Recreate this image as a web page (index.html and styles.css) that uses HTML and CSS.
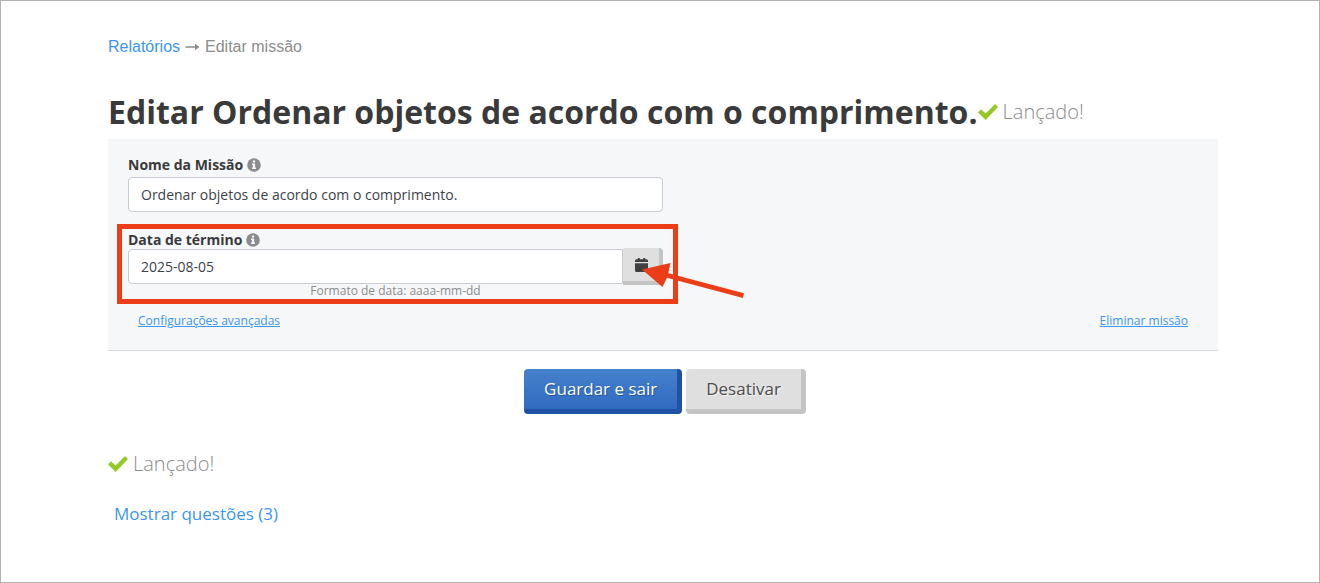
FILE: index.html
```html
<!DOCTYPE html>
<html lang="pt">
<head>
<meta charset="utf-8">
<meta name="viewport" content="width=device-width, initial-scale=1">
<title>Editar missão</title>
<link rel="stylesheet" href="styles.css">
</head>
<body>
<svg class="defs" aria-hidden="true">
  <symbol id="check" viewBox="0 0 20 16"><path d="M0 8.6 3 5.3 7.6 9.6 17 0 20 3 7.7 16Z"/></symbol>
  <symbol id="info" viewBox="0 0 14 14"><circle cx="7" cy="7" r="6.8" fill="#8c8c8c"/><path fill="#f6f7f9" d="M5.9 2.4h2.2v2H5.9ZM5 5.6h3.1v4h.9v1.5H5V9.6h.9V7.1H5Z"/></symbol>
</svg>
<main class="page">
  <nav class="breadcrumb"><a class="link" href="#">Relatórios</a><svg class="crumb-arrow" viewBox="0 0 14 8" aria-hidden="true"><path d="M0 3.3h9.5V.8L14 4 9.5 7.2V4.7H0Z"/></svg><span>Editar missão</span></nav>
  <header class="heading">
    <h1 class="title">Editar Ordenar objetos de acordo com o comprimento.</h1>
    <span class="status"><svg class="check"><use href="#check"/></svg>Lançado!</span>
  </header>
  <form class="form">
    <section class="panel">
      <div class="group">
        <div class="label-row"><label for="name">Nome da Missão</label><svg class="info"><use href="#info"/></svg></div>
        <input class="input" id="name" type="text" value="Ordenar objetos de acordo com o comprimento.">
      </div>
      <div class="group date-group">
        <div class="label-row date-label"><label for="date">Data de término</label><svg class="info"><use href="#info"/></svg></div>
        <div class="date-row">
          <input class="input date-input" id="date" type="text" value="2025-08-05">
          <button class="button calendar-button" type="button" aria-label="Abrir calendário"><svg class="calendar" viewBox="0 0 13 14"><path d="M1.5 1.3h1.3V0h2v1.3h3.4V0h2v1.3h1.3Q13 1.3 13 2.8V4H0V2.8Q0 1.3 1.5 1.3ZM0 5.2h13v7.3q0 1.5-1.5 1.5h-10Q0 14 0 12.5Z"/></svg></button>
        </div>
        <p class="hint">Formato de data: aaaa-mm-dd</p>
        <div class="highlight"></div>
        <svg class="pointer" viewBox="0 0 103 36" aria-hidden="true"><path d="M0 7.5 28.5 1 26.3 11.2 102 31.2 101 36 25 15.8 20.5 25Z"/></svg>
      </div>
      <div class="panel-links"><a href="#">Configurações avançadas</a><a href="#">Eliminar missão</a></div>
    </section>
    <div class="actions">
      <button class="button primary" type="button">Guardar e sair</button>
      <button class="button" type="button">Desativar</button>
    </div>
  </form>
  <span class="status"><svg class="check"><use href="#check"/></svg>Lançado!</span>
  <a class="link questions" href="#">Mostrar questões (3)</a>
</main>
</body>
</html>
```

FILE: styles.css
```css
* { box-sizing: border-box; }
body { margin: 0; background: #fff; color: #3a3a3a; font: 14px/20px "Open Sans", "Noto Sans", sans-serif; }
.defs { position: absolute; width: 0; height: 0; }
.page { min-height: 100vh; border: 1px solid #b3b3b3; padding: 36px 101px 20px 107px; }
.link { color: #3c96ee; text-decoration: none; }
.breadcrumb { display: flex; align-items: center; gap: 5px; color: #8c8c8c; font: 16px/20px "Liberation Sans", Arial, sans-serif; }
.crumb-arrow { width: 15px; height: 8px; fill: #8c8c8c; }
.heading { display: flex; align-items: center; margin-top: 32px; }
.title { margin: 0; font-size: 32px; line-height: 46px; font-weight: 700; white-space: nowrap; }
.status { display: flex; align-items: center; gap: 5px; color: #8c8c8c; font-size: 20px; line-height: 28px; font-weight: 300; }
.check { width: 20px; height: 16px; fill: #97c926; }
.panel { padding: 16px 20px 19px; margin-top: 4px; background: #f6f7f9; border-bottom: 1px solid #d8dde3; }
.group { width: 50%; }
.label-row { display: flex; align-items: center; gap: 4px; height: 22px; padding-bottom: 2px; font-weight: 700; }
.info { width: 14px; height: 14px; }
.input { display: block; width: 100%; height: 35px; padding: 0 12px; border: 1px solid #c8ccd2; border-radius: 4px; background: #fff; color: #3d4248; font: inherit; }
.date-group { position: relative; margin-top: 19px; }
.date-label { height: 18px; padding: 0; }
.date-row { display: flex; }
.date-input { flex: 1; min-width: 0; border-radius: 4px 0 0 4px; }
.hint { margin: 0; color: #8c8c8c; font-size: 12px; line-height: 14px; text-align: center; }
.highlight { position: absolute; inset: -7px -15px -6px -11px; border: 5px solid #ea3d18; pointer-events: none; }
.pointer { position: absolute; right: -82px; top: 31px; width: 103px; height: 36px; fill: #ea3d18; pointer-events: none; }
.panel-links { display: flex; justify-content: space-between; margin-top: 13px; padding: 0 10px; font-size: 12px; }
.panel-links a { color: #3c96ee; }
.actions { display: flex; justify-content: center; gap: 4px; margin: 18px 0 36px; padding-left: 4px; }
.button { height: 45px; padding: 0 20px; border: solid #c4c4c4; border-width: 0 5px 5px 0; border-radius: 4px; background: #dfdfdf; color: #4b4b4b; font: 17px/40px "Open Sans", sans-serif; text-shadow: 1px 1px 0 #f4f4f4; }
.primary { border-color: #1f52a4; background: linear-gradient(#4581cc, #306bc0); color: #fff; text-shadow: 1px 1px 0 #245499; }
.calendar-button { display: flex; align-items: center; justify-content: center; width: 41px; height: 37px; margin: -1px 0 -1px -1px; padding: 0; border-width: 0 4px 4px 0; border-radius: 0 4px 4px 0; }
.date-row .calendar-button { width: 41px; margin-left: 0; flex: 0 0 40px; }
.calendar { width: 13px; height: 14px; fill: #404040; }
.questions { display: inline-block; margin: 23px 0 0 6px; font-size: 17px; line-height: 26px; }
```
